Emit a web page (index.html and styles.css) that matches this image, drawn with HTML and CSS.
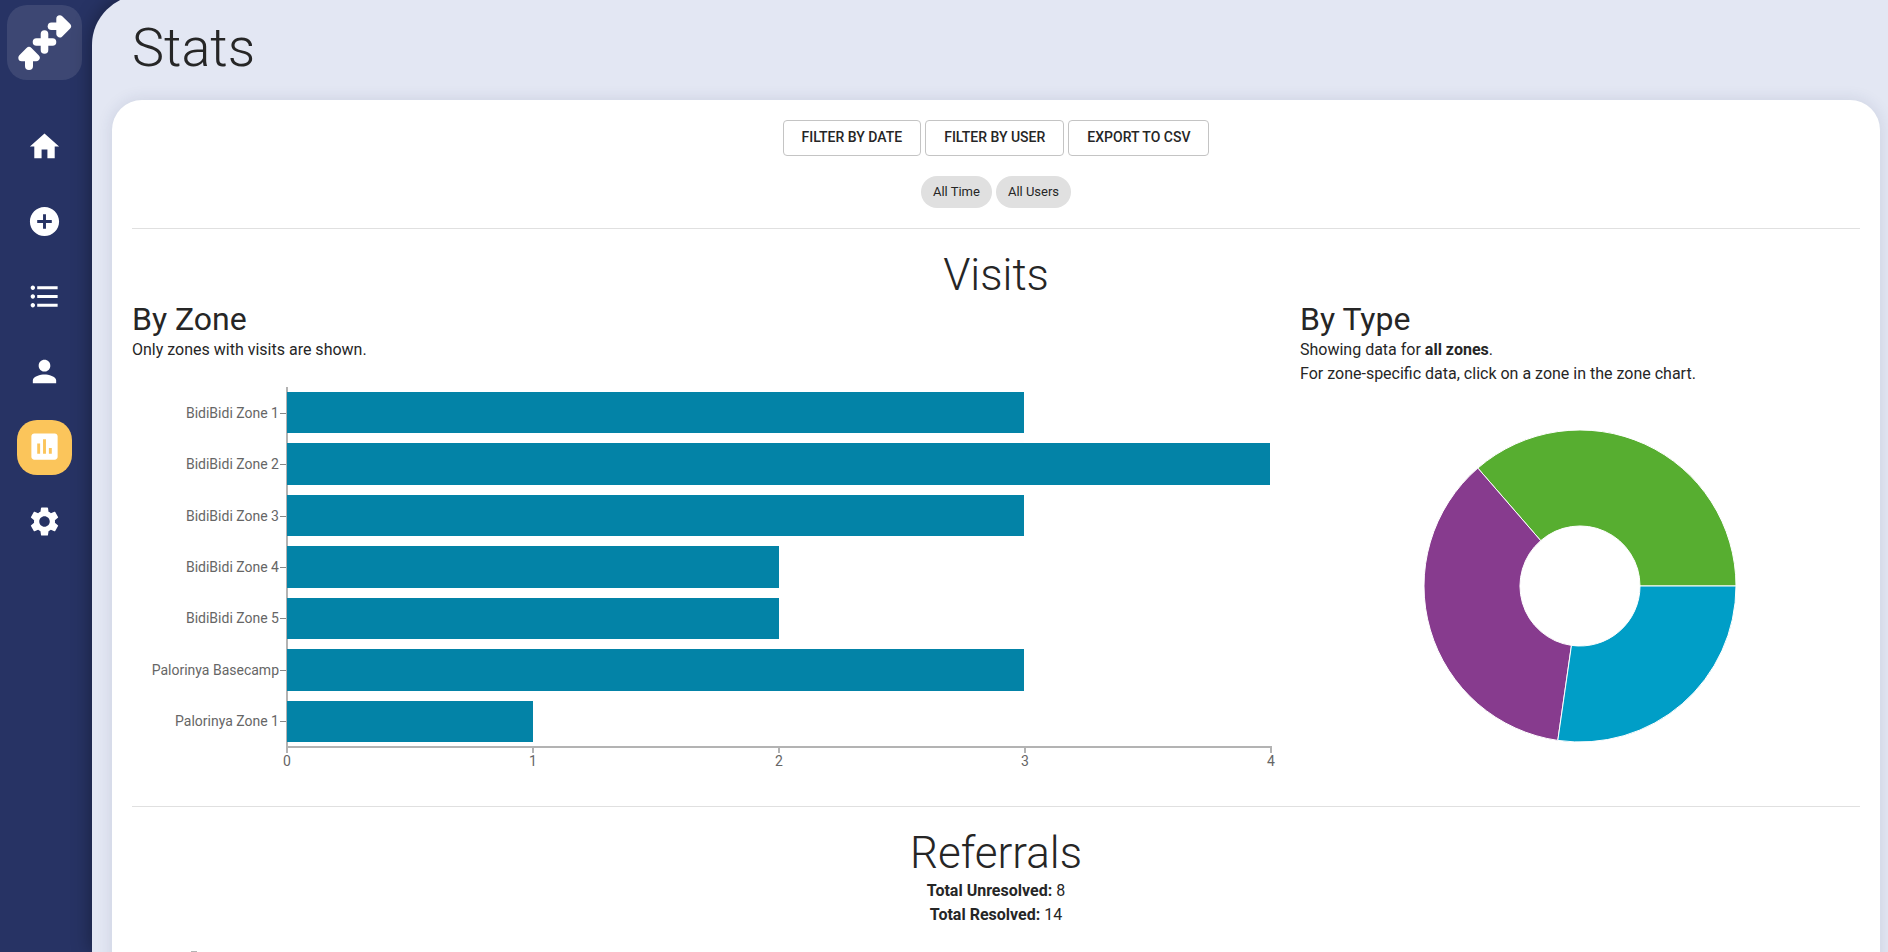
FILE: index.html
```html
<!DOCTYPE html>
<html lang="en">
<head>
<meta charset="utf-8">
<meta name="viewport" content="width=device-width, initial-scale=1">
<title>Stats</title>
<link rel="stylesheet" href="styles.css">
</head>
<body>
<nav class="sidebar" aria-label="Main">
  <a class="logo" href="#" aria-label="Start page">
    <svg viewBox="0 0 75 75" aria-hidden="true">
      <g fill="#fff" stroke="#fff" stroke-width="7" stroke-linejoin="round" stroke-linecap="round">
        <path d="M22 45.500 29.200 52.700H14.800Z"/>
        <path d="M22 50V61" stroke-width="8"/>
        <path d="M37.500 29V45M29.500 37H45.500" stroke-width="7.600"/>
        <path d="M52.800 13.700 60.500 21.300 52.800 28.900Z"/>
        <path d="M44.500 21.300H54" stroke-width="7.600"/>
      </g>
    </svg>
  </a>
  <a class="nav-item" href="#" aria-label="Home"><svg viewBox="0 0 24 24"><path d="M10 20v-6h4v6h5v-8h3L12 3 2 12h3v8z"/></svg></a>
  <a class="nav-item" href="#" aria-label="New visit"><svg viewBox="0 0 24 24"><path d="M12 2C6.480 2 2 6.480 2 12s4.480 10 10 10 10-4.480 10-10S17.520 2 12 2zm5 11h-4v4h-2v-4H7v-2h4V7h2v4h4v2z"/></svg></a>
  <a class="nav-item" href="#" aria-label="Clients"><svg viewBox="0 0 24 24"><path d="M4 10.500c-.830 0-1.500.670-1.500 1.500s.670 1.500 1.500 1.500 1.500-.670 1.500-1.500-.670-1.500-1.500-1.500zm0-6c-.830 0-1.500.670-1.500 1.500S3.170 7.500 4 7.500 5.500 6.830 5.500 6 4.830 4.500 4 4.500zm0 12c-.830 0-1.500.680-1.500 1.500s.680 1.500 1.500 1.500 1.500-.680 1.500-1.500-.670-1.500-1.500-1.500zM7 19h14v-2H7v2zm0-6h14v-2H7v2zm0-8v2h14V5H7z"/></svg></a>
  <a class="nav-item" href="#" aria-label="Users"><svg viewBox="0 0 24 24"><path d="M12 12c2.210 0 4-1.790 4-4s-1.790-4-4-4-4 1.790-4 4 1.790 4 4 4zm0 2c-2.670 0-8 1.340-8 4v2h16v-2c0-2.660-5.330-4-8-4z"/></svg></a>
  <a class="nav-item active" href="#" aria-label="Stats" aria-current="page"><svg viewBox="0 0 24 24"><path d="M19 3H5c-1.100 0-2 .9-2 2v14c0 1.100.9 2 2 2h14c1.100 0 2-.9 2-2V5c0-1.100-.9-2-2-2zM9 17H7v-7h2v7zm4 0h-2V7h2v10zm4 0h-2v-4h2v4z"/></svg></a>
  <a class="nav-item" href="#" aria-label="Settings"><svg viewBox="0 0 24 24"><path d="M19.140 12.940c.040-.3.060-.610.060-.940 0-.320-.020-.640-.070-.940l2.030-1.580c.180-.140.230-.410.120-.610l-1.920-3.320c-.120-.220-.370-.290-.590-.220l-2.390.960c-.5-.380-1.030-.7-1.620-.940l-.360-2.540c-.040-.240-.240-.410-.480-.410h-3.840c-.240 0-.430.170-.470.410l-.360 2.540c-.590.240-1.130.570-1.620.940l-2.390-.960c-.220-.080-.470 0-.590.220L2.740 8.870c-.120.210-.080.470.120.610l2.030 1.580c-.050.3-.090.630-.090.940s.020.640.070.940l-2.030 1.580c-.180.140-.230.410-.120.610l1.920 3.320c.120.220.370.290.590.220l2.390-.960c.5.380 1.030.7 1.620.940l.360 2.540c.050.240.240.410.480.410h3.840c.240 0 .440-.170.470-.410l.360-2.540c.590-.240 1.130-.560 1.620-.940l2.390.960c.220.080.470 0 .590-.220l1.920-3.320c.120-.220.070-.470-.120-.610l-2.010-1.580zM12 15.600c-1.980 0-3.600-1.620-3.600-3.600s1.620-3.600 3.600-3.600 3.600 1.620 3.600 3.600-1.620 3.600-3.600 3.600z"/></svg></a>
</nav>

<main class="page">
  <header class="page-header"><h1>Stats</h1></header>
  <div class="card">
    <div class="actions">
      <button type="button" class="button">FILTER BY DATE</button>
      <button type="button" class="button">FILTER BY USER</button>
      <button type="button" class="button">EXPORT TO CSV</button>
    </div>
    <div class="chips">
      <span class="chip">All Time</span>
      <span class="chip">All Users</span>
    </div>
    <hr>

    <section>
      <h2>Visits</h2>
      <div class="charts">
        <div class="zone-panel">
          <h3>By Zone</h3>
          <p>Only zones with visits are shown.</p>
          <div class="bar-chart">
            <div class="bar-row"><span class="bar-label">BidiBidi Zone 1</span><div class="bar-track"><div class="bar" style="width:75%"></div></div></div>
            <div class="bar-row"><span class="bar-label">BidiBidi Zone 2</span><div class="bar-track"><div class="bar" style="width:100%"></div></div></div>
            <div class="bar-row"><span class="bar-label">BidiBidi Zone 3</span><div class="bar-track"><div class="bar" style="width:75%"></div></div></div>
            <div class="bar-row"><span class="bar-label">BidiBidi Zone 4</span><div class="bar-track"><div class="bar" style="width:50%"></div></div></div>
            <div class="bar-row"><span class="bar-label">BidiBidi Zone 5</span><div class="bar-track"><div class="bar" style="width:50%"></div></div></div>
            <div class="bar-row"><span class="bar-label">Palorinya Basecamp</span><div class="bar-track"><div class="bar" style="width:75%"></div></div></div>
            <div class="bar-row"><span class="bar-label">Palorinya Zone 1</span><div class="bar-track"><div class="bar" style="width:25%"></div></div></div>
          </div>
          <div class="scale">
            <span>0</span><span>1</span><span>2</span><span>3</span><span>4</span>
          </div>
        </div>
        <div class="type-panel">
          <h3>By Type</h3>
          <p>Showing data for <b>all zones</b>.</p>
          <p>For zone-specific data, click on a zone in the zone chart.</p>
          <svg class="donut" viewBox="-200 -200 400 400" role="img" aria-label="Visits by type">
            <g stroke="#fff" stroke-width="1">
              <path fill="#57ae30" d="M156 0A156 156 0 0 0 -102.160 -117.900L-39.290 -45.350A60 60 0 0 1 60 0Z"/>
              <path fill="#873b8e" d="M-102.160 -117.900A156 156 0 0 0 -22.200 154.410L-8.540 59.390A60 60 0 0 1 -39.290 -45.350Z"/>
              <path fill="#009ec7" d="M-22.200 154.410A156 156 0 0 0 156 0L60 0A60 60 0 0 1 -8.540 59.390Z"/>
            </g>
          </svg>
        </div>
      </div>
    </section>
    <hr>

    <section>
      <h2>Referrals</h2>
      <p class="total"><b>Total Unresolved:</b> 8</p>
      <p class="total"><b>Total Resolved:</b> 14</p>
      <div class="next-chart"></div>
    </section>
  </div>
</main>
</body>
</html>
```
FILE: styles.css
```css
* {
  box-sizing: border-box;
}

body {
  display: flex;
  height: 100vh;
  margin: 0;
  overflow: hidden;
  background: #273364;
  color: #262626;
  font: 400 16px/24px Roboto, "Liberation Sans", sans-serif;
}

h1,
h2,
h3,
p {
  margin: 0;
}

h1 {
  font-size: 54px;
  font-weight: 300;
  line-height: 66px;
}

h2 {
  font-size: 44px;
  font-weight: 300;
  line-height: 52px;
  text-align: center;
}

h3 {
  margin-bottom: 1px;
  font-size: 32px;
  font-weight: 400;
  line-height: 36px;
}

b {
  font-weight: 700;
}

hr {
  height: 1px;
  margin: 20px 0;
  border: 0;
  background: #e0e0e0;
}

/* Sidebar */
.sidebar {
  display: flex;
  flex: none;
  flex-direction: column;
  align-items: center;
  gap: 20px;
  width: 92px;
  padding: 5px 3px 0 0;
}

.logo {
  width: 75px;
  height: 75px;
  margin-bottom: 20px;
  border-radius: 20px;
  background: rgba(255, 255, 255, 0.1);
}

.logo svg {
  display: block;
  width: 100%;
}

.nav-item {
  display: flex;
  justify-content: center;
  width: 55px;
  height: 55px;
  padding-top: 9px;
  border-radius: 20px;
}

.nav-item.active {
  background: #fbc55b;
}

.nav-item svg {
  width: 35px;
  height: 35px;
  fill: #fff;
}

/* Page */
.page {
  flex: 1;
  min-width: 0;
  margin-top: -5px;
  padding: 0 8px 0 20px;
  overflow-y: auto;
  scrollbar-width: none;
  border-top-left-radius: 50px;
  background: #e3e7f3;
  box-shadow: 0 0 20px rgba(0, 0, 0, 0.4);
}

.page-header {
  padding: 20px 20px 19px;
}

.card {
  padding: 20px;
  border-radius: 30px;
  background: #fff;
  box-shadow: 0 0 16px rgba(39, 51, 100, 0.13);
}

.actions,
.chips {
  display: flex;
  flex-wrap: wrap;
  justify-content: center;
  gap: 4px;
}

.chips {
  margin-top: 20px;
}

.button {
  height: 36px;
  padding: 0 18px 2px;
  border: 1px solid #c4c4c4;
  border-radius: 4px;
  background: #fff;
  color: inherit;
  font: 500 14px/24px Roboto, "Liberation Sans", sans-serif;
}

.chip {
  padding: 0 12px;
  border-radius: 16px;
  background: #e0e0e0;
  font-size: 13px;
  line-height: 32px;
}

/* Charts */
.charts {
  display: grid;
  grid-template-columns: 41fr 20fr;
  gap: 20px;
}

.bar-chart {
  display: flex;
  flex-direction: column;
  height: 360px;
  margin: 25px 9px 0 0;
  color: #666;
  font-size: 14px;
}

.bar-row {
  display: flex;
  flex: 1;
  align-items: center;
}

.bar-label {
  width: 154px;
  padding-right: 7px;
  text-align: right;
}

.bar-label::after {
  content: "";
  float: right;
  width: 6px;
  height: 1px;
  margin: 12px -7px 0 1px;
  background: #888;
}

.bar-track {
  flex: 1;
  align-self: stretch;
  padding: 5px 0;
  border-left: 2px solid #b3b3b3;
}

.bar {
  height: 100%;
  margin-left: -1px;
  background: #0383a7;
}

.scale {
  display: flex;
  justify-content: space-between;
  margin: -1px 8px 0 154px;
  border-top: 2px solid #b3b3b3;
  color: #666;
  font-size: 14px;
  line-height: 16px;
}

.scale span {
  display: flex;
  flex-direction: column;
  align-items: center;
  width: 2px;
}

.scale span::before {
  content: "";
  width: 2px;
  height: 5px;
  background: #b3b3b3;
}

.donut {
  display: block;
  width: 100%;
  height: 400px;
}

.total {
  text-align: center;
}

.next-chart {
  height: 360px;
  margin: 24px 0 0 59px;
  border-left: 6px solid #b3b3b3;
}
```
